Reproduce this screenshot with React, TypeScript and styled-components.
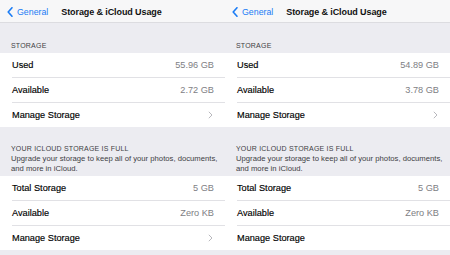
import React from "react";
import styled, { createGlobalStyle } from "styled-components";

const GlobalStyle = createGlobalStyle`
  html, body { margin: 0; padding: 0; background: #efeff4; }
  body { font-family: "Liberation Sans", Arial, Helvetica, sans-serif; }
`;

const Screen = styled.div`
  display: grid;
  grid-template-columns: 225px 225px;
  width: 450px;
  height: 255px;
  overflow: hidden;
  background: #ececf1;
`;

const Panel = styled.div`
  display: flex;
  flex-direction: column;
  min-width: 0;
  background: #ececf1;
`;

const Nav = styled.div`
  height: 23px;
  display: flex;
  align-items: center;
  padding-left: 7px;
  padding-top: 1px;
  box-sizing: border-box;
  background: #f7f7f8;
  border-bottom: 1px solid #dcdce0;
`;

const Back = styled.div`
  display: flex;
  align-items: center;
  gap: 4px;
  color: #1a7cf5;
  font-size: 8.8px;
`;

const Title = styled.div`
  margin-left: 13px;
  font-size: 9px;
  font-weight: 700;
  color: #111;
  letter-spacing: -0.1px;
`;

const GroupHeader = styled.div<{ $top: number; $bottom: number }>`
  padding: ${(p) => p.$top}px 0 ${(p) => p.$bottom}px 11px;
  white-space: nowrap;
`;

const Caps = styled.div`
  font-size: 7px;
  line-height: 10px;
  letter-spacing: 0.2px;
  text-transform: uppercase;
  color: #3e3e44;
`;

const Note = styled.div`
  font-size: 7.7px;
  line-height: 10px;
  color: #3e3e44;
`;

const Group = styled.div`
  background: #ffffff;
  display: flex;
  flex-direction: column;
`;

const Row = styled.div<{ $last?: boolean }>`
  height: 24px;
  display: flex;
  align-items: center;
  justify-content: space-between;
  margin-left: 12px;
  padding-right: 11px;
  border-bottom: ${(p) => (p.$last ? "none" : "1px solid #e1e1e5")};
`;

const Label = styled.span`
  font-size: 9.2px;
  color: #000;
  -webkit-text-stroke: 0.15px #000;
`;

const Value = styled.span`
  font-size: 9.2px;
  color: #7e7e84;
`;

const Chevron = () => (
  <svg width="5" height="8" viewBox="0 0 5 8" style={{ marginRight: 1 }}>
    <path d="M0.8 0.8 L4 4 L0.8 7.2" fill="none" stroke="#b8b8bd" strokeWidth="1" />
  </svg>
);

const BackChevron = () => (
  <svg width="6" height="10" viewBox="0 0 6 10">
    <path d="M5 0.8 L1.2 5 L5 9.2" fill="none" stroke="#1a7cf5" strokeWidth="1.6" strokeLinecap="round" strokeLinejoin="round" />
  </svg>
);

type Item = { label: string; value?: string; chevron?: boolean };

type PanelData = {
  local: Item[];
  cloud: Item[];
};

const panels: PanelData[] = [
  {
    local: [
      { label: "Used", value: "55.96 GB" },
      { label: "Available", value: "2.72 GB" },
      { label: "Manage Storage", chevron: true },
    ],
    cloud: [
      { label: "Total Storage", value: "5 GB" },
      { label: "Available", value: "Zero KB" },
      { label: "Manage Storage", chevron: true },
    ],
  },
  {
    local: [
      { label: "Used", value: "54.89 GB" },
      { label: "Available", value: "3.78 GB" },
      { label: "Manage Storage", chevron: true },
    ],
    cloud: [
      { label: "Total Storage", value: "5 GB" },
      { label: "Available", value: "Zero KB" },
      { label: "Manage Storage", chevron: false },
    ],
  },
];

const Rows = ({ items }: { items: Item[] }) => (
  <Group>
    {items.map((it, i) => (
      <Row key={i} $last={i === items.length - 1}>
        <Label>{it.label}</Label>
        {it.value ? <Value>{it.value}</Value> : it.chevron ? <Chevron /> : null}
      </Row>
    ))}
  </Group>
);

export default function App() {
  return (
    <>
      <GlobalStyle />
      <Screen>
        {panels.map((p, i) => (
          <Panel key={i}>
            <Nav>
              <Back>
                <BackChevron />
                <span>General</span>
              </Back>
              <Title>Storage &amp; iCloud Usage</Title>
            </Nav>
            <GroupHeader $top={18} $bottom={2}>
              <Caps>Storage</Caps>
            </GroupHeader>
            <Rows items={p.local} />
            <GroupHeader $top={17} $bottom={2}>
              <Caps>Your iCloud Storage is Full</Caps>
              <Note>Upgrade your storage to keep all of your photos, documents,</Note>
              <Note>and more in iCloud.</Note>
            </GroupHeader>
            <Rows items={p.cloud} />
          </Panel>
        ))}
      </Screen>
    </>
  );
}
